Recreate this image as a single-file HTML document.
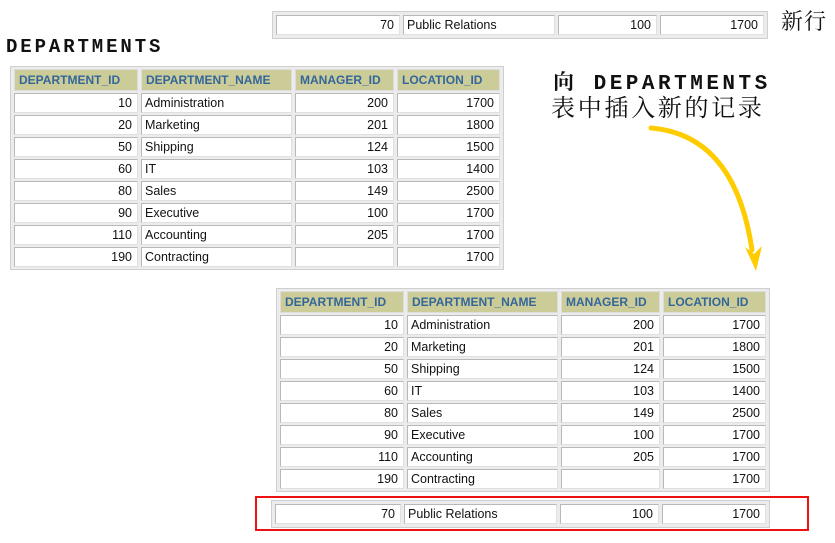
<!DOCTYPE html>
<html><head><meta charset="utf-8"><style>
body{margin:0;width:835px;height:543px;background:#fff;position:relative;overflow:hidden;font-family:"Liberation Sans",Arial,sans-serif;}
table.t{position:absolute;border-collapse:separate;border-spacing:3px 2.2px;background:#ececec;border:1px solid #cfcfcf;table-layout:fixed;}
table.t td{border:1px solid #b8b8b8;border-right-color:#e0e0e0;border-bottom-color:#e0e0e0;background:#fff;height:18px;padding:0 3px;font-size:12.5px;color:#111;white-space:nowrap;overflow:hidden;box-sizing:border-box;line-height:18px}
table.t td.r{text-align:right;padding-right:5px}
table.t th{background:#cccc99;color:#336699;font-weight:bold;font-size:12px;height:22px;text-align:left;padding:0 4px;border:1px solid #ddd;box-sizing:border-box;white-space:nowrap;transform-origin:left}
.h{position:absolute;font-family:"Liberation Mono",monospace;font-weight:bold;color:#111;white-space:nowrap}
.c{position:absolute;font-family:"Liberation Serif","Noto Serif CJK SC",serif;color:#111;white-space:nowrap}
</style></head><body>

<table class="t" style="left:272px;top:11px;width:496px;border-spacing:3px 3px">
<colgroup><col style="width:124px"><col style="width:152px"><col style="width:99px"><col style="width:104px"></colgroup>
<tr><td class="r">70</td><td>Public Relations</td><td class="r">100</td><td class="r">1700</td></tr>
</table>
<div class="c" style="left:781px;top:5px;font-size:22px;letter-spacing:1px">新行</div>

<div class="h" style="left:6px;top:36px;font-size:19px;letter-spacing:2.9px">DEPARTMENTS</div>

<table class="t" style="left:10px;top:66px;width:494px">
<colgroup><col style="width:124px"><col style="width:151px"><col style="width:99px"><col style="width:103px"></colgroup>
<tr><th>DEPARTMENT_ID</th><th>DEPARTMENT_NAME</th><th>MANAGER_ID</th><th>LOCATION_ID</th></tr>
<tr><td class="r">10</td><td>Administration</td><td class="r">200</td><td class="r">1700</td></tr>
<tr><td class="r">20</td><td>Marketing</td><td class="r">201</td><td class="r">1800</td></tr>
<tr><td class="r">50</td><td>Shipping</td><td class="r">124</td><td class="r">1500</td></tr>
<tr><td class="r">60</td><td>IT</td><td class="r">103</td><td class="r">1400</td></tr>
<tr><td class="r">80</td><td>Sales</td><td class="r">149</td><td class="r">2500</td></tr>
<tr><td class="r">90</td><td>Executive</td><td class="r">100</td><td class="r">1700</td></tr>
<tr><td class="r">110</td><td>Accounting</td><td class="r">205</td><td class="r">1700</td></tr>
<tr><td class="r">190</td><td>Contracting</td><td class="r"></td><td class="r">1700</td></tr>
</table>

<div class="h" style="left:553px;top:66px;font-size:21px;letter-spacing:3.5px"><span style="font-family:'Noto Serif CJK SC',serif;font-weight:bold">向</span> DEPARTMENTS</div>
<div class="c" style="left:551px;top:88px;font-size:24px;letter-spacing:2.7px">表中插入新的记录</div>

<svg style="position:absolute;left:0;top:0" width="835" height="543">
<path d="M651 128 Q735 135 752 250" fill="none" stroke="#ffcc00" stroke-width="5" stroke-linecap="round"/>
<path d="M745 247 L756 271 L762 246 L754 254 Z" fill="#ffcc00"/>
<rect x="256" y="497" width="552" height="33" fill="none" stroke="#ee1111" stroke-width="2"/>
</svg>

<table class="t" style="left:276px;top:288px;width:493px">
<colgroup><col style="width:124px"><col style="width:151px"><col style="width:99px"><col style="width:103px"></colgroup>
<tr><th>DEPARTMENT_ID</th><th>DEPARTMENT_NAME</th><th>MANAGER_ID</th><th>LOCATION_ID</th></tr>
<tr><td class="r">10</td><td>Administration</td><td class="r">200</td><td class="r">1700</td></tr>
<tr><td class="r">20</td><td>Marketing</td><td class="r">201</td><td class="r">1800</td></tr>
<tr><td class="r">50</td><td>Shipping</td><td class="r">124</td><td class="r">1500</td></tr>
<tr><td class="r">60</td><td>IT</td><td class="r">103</td><td class="r">1400</td></tr>
<tr><td class="r">80</td><td>Sales</td><td class="r">149</td><td class="r">2500</td></tr>
<tr><td class="r">90</td><td>Executive</td><td class="r">100</td><td class="r">1700</td></tr>
<tr><td class="r">110</td><td>Accounting</td><td class="r">205</td><td class="r">1700</td></tr>
<tr><td class="r">190</td><td>Contracting</td><td class="r"></td><td class="r">1700</td></tr>
</table>

<table class="t" style="left:271px;top:500px;width:497px;border-spacing:3px 3px">
<colgroup><col style="width:126px"><col style="width:153px"><col style="width:99px"><col style="width:104px"></colgroup>
<tr><td class="r">70</td><td>Public Relations</td><td class="r">100</td><td class="r">1700</td></tr>
</table>
</body></html>
